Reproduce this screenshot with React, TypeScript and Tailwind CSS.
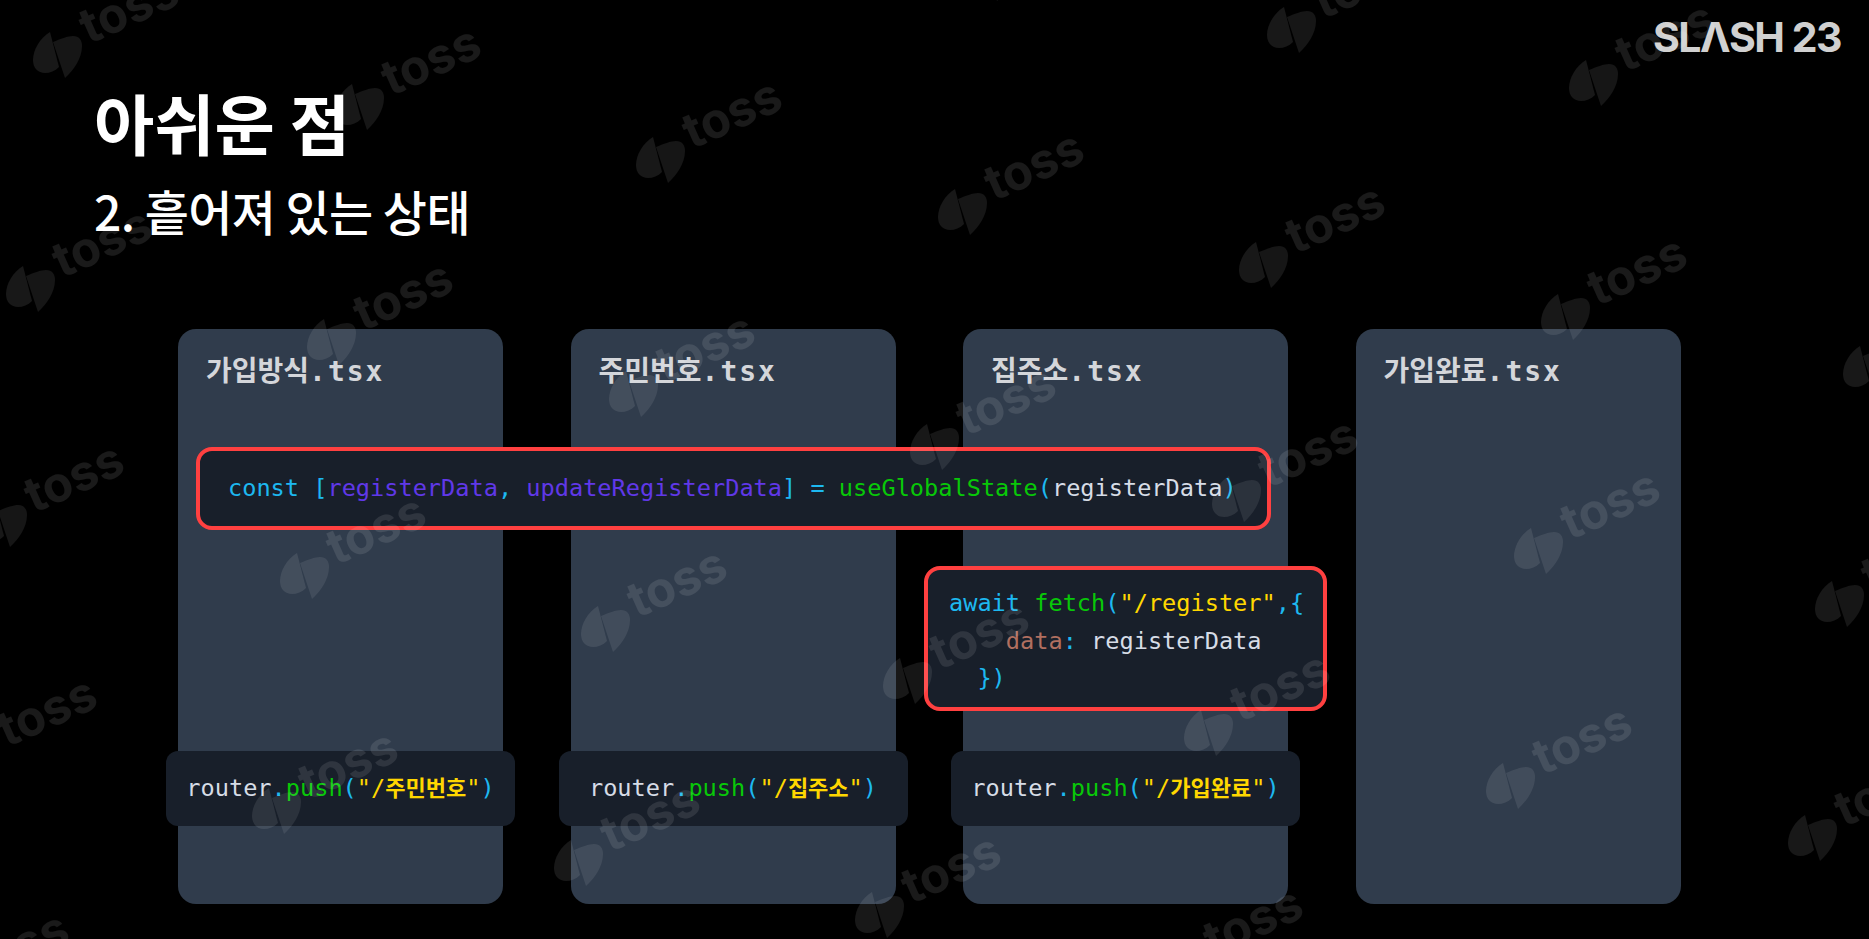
const MONO = 'font-["DejaVu_Sans_Mono","Noto_Sans_CJK_KR",monospace]';

const cyan = 'text-[#1db8f0]';
const green = 'text-[#08c808]';
const plain = 'text-[#d6dce6]';
const yellow = 'text-[#ffd700]';

// watermark sits on a skewed lattice, one leaf + "toss" per cell
const marks: { x: number; y: number }[] = [];
for (let row = -2; row < 6; row++) {
  for (let col = -2; col < 9; col++) {
    const x = 57 + col * 301.6 - row * 27.5;
    const y = 55 + col * 52.4 + row * 234.4;
    if (x > -200 && x < 1900 && y > -120 && y < 1040) marks.push({ x, y });
  }
}

function TossMark({ x, y }: { x: number; y: number }) {
  return (
    <div className="absolute" style={{ left: x, top: y }}>
      <svg width="56" height="62" viewBox="0 0 56 62" className="absolute left-[-27px] top-[-35px]">
        <path d="M20 12C10 18 3 30 3 40C3 48 8 53 15 53C20 53 25 51 29 47Z" fill="#fff" fillOpacity="0.095" />
        <path d="M23 22C30 19 38 16 43 16C49 16 52 20 52 26C52 38 44 50 35 58Z" fill="#fff" fillOpacity="0.085" />
      </svg>
      <span className="absolute left-[25px] top-[-54px] origin-left -rotate-[24deg] font-['Inter',sans-serif] text-[49px] leading-[56px] font-bold text-white/10">
        toss
      </span>
    </div>
  );
}

function RouterBox({ page }: { page: string }) {
  return (
    <div className={`-mx-3 mb-[78px] flex h-[75px] items-center justify-center rounded-xl bg-[#181f2a] text-[23.6px] ${MONO}`}>
      <span className={plain}>router</span>
      <span className={cyan}>.</span>
      <span className={green}>push</span>
      <span className={cyan}>(</span>
      <span className={yellow}>"/</span>
      <span className={`${yellow} text-[22px] font-bold`}>{page}</span>
      <span className={yellow}>"</span>
      <span className={cyan}>)</span>
    </div>
  );
}

function FileCard({ name, page }: { name: string; page?: string }) {
  return (
    <div className="flex h-[575px] w-[325px] flex-col justify-between rounded-[18px] bg-[#303c4c]">
      <div className={`pt-6 pl-7 text-[28px] leading-[38px] font-semibold text-[#d4d6da] ${MONO}`}>
        {name}
        <span className="tracking-[2px]">.tsx</span>
      </div>
      {page && <RouterBox page={page} />}
    </div>
  );
}

export default function App() {
  return (
    <div className="relative h-screen w-full overflow-hidden bg-black font-['Noto_Sans_CJK_KR',sans-serif]">
      <div className="flex justify-end pt-[14px] pr-[28px] font-['Inter',sans-serif] text-[41px] leading-[46px] font-bold tracking-[-1.5px] text-[#d0d0d0]">
        SLΛSH 23
      </div>

      <div className="pl-[94px]">
        <h1 className="mt-[22px] text-[65.5px] leading-[80px] font-bold text-white">아쉬운 점</h1>
        <h2 className="mt-[18px] text-[48px] leading-[60px] font-medium tracking-[-0.6px] text-white">2. 흩어져 있는 상태</h2>
      </div>

      <div className="mt-[89px] flex gap-[67.5px] pl-[178px]">
        <FileCard name="가입방식" page="주민번호" />
        <FileCard name="주민번호" page="집주소" />
        <FileCard name="집주소" page="가입완료" />
        <FileCard name="가입완료" />
      </div>

      {/* red call-outs lie over the cards */}
      <div className={`absolute top-[447px] left-[196px] flex h-[83px] w-[1075px] items-center rounded-2xl border-4 border-[#ff4040] bg-[#181f2a] pl-[28px] text-[23.6px] whitespace-pre ${MONO}`}>
        <span className={cyan}>const [</span>
        <span className="text-[#6038e8]">registerData</span>
        <span className={cyan}>, </span>
        <span className="text-[#6038e8]">updateRegisterData</span>
        <span className={cyan}>] = </span>
        <span className={green}>useGlobalState</span>
        <span className={cyan}>(</span>
        <span className={plain}>registerData</span>
        <span className={cyan}>)</span>
      </div>

      <div className={`absolute top-[566px] left-[924px] h-[145px] w-[403px] rounded-2xl border-4 border-[#ff4040] bg-[#181f2a] pt-[15px] pl-[21px] text-[23.6px] leading-[37.5px] whitespace-pre ${MONO}`}>
        <div>
          <span className={cyan}>await </span>
          <span className={green}>fetch</span>
          <span className={cyan}>(</span>
          <span className={yellow}>"/register"</span>
          <span className={cyan}>,{'{'}</span>
        </div>
        <div>
          <span className="text-[#b06f60]">{'    data'}</span>
          <span className={cyan}>: </span>
          <span className={plain}>registerData</span>
        </div>
        <div className={cyan}>{'  })'}</div>
      </div>

      <div className="pointer-events-none absolute inset-0 overflow-hidden">
        {marks.map((m) => (
          <TossMark key={`${m.x}-${m.y}`} x={m.x} y={m.y} />
        ))}
      </div>
    </div>
  );
}
